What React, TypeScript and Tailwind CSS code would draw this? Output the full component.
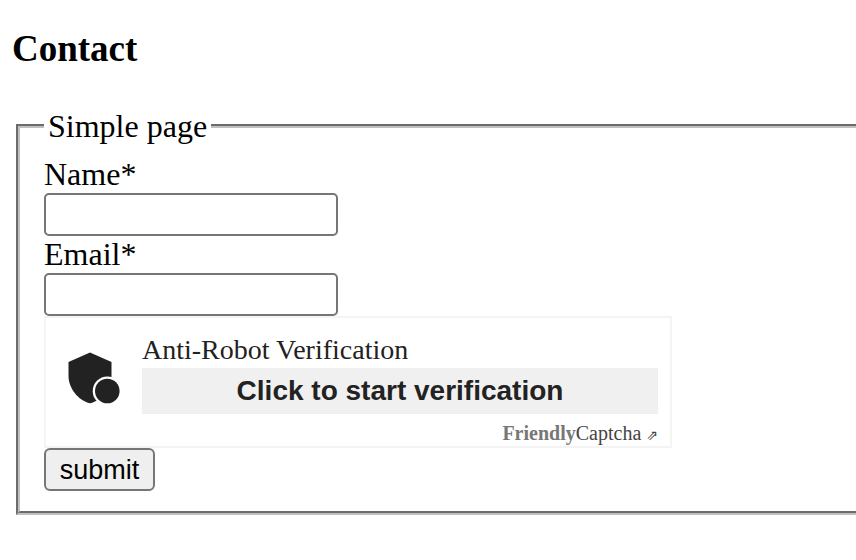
import type { InputHTMLAttributes } from 'react';

type FieldProps = InputHTMLAttributes<HTMLInputElement> & { id: string; label: string };

function Field({ id, label, ...rest }: FieldProps) {
  return (
    <div className="flex flex-col items-start">
      <label htmlFor={id} className="text-[32px] leading-[37px]">
        {label}
      </label>
      <input
        id={id}
        name={id}
        className="h-[43px] w-[294px] max-w-full rounded-[5px] border-2 border-[#767676] bg-white px-1 font-['Liberation_Sans',Arial,sans-serif] text-[27px]"
        {...rest}
      />
    </div>
  );
}

function ShieldIcon() {
  return (
    <svg viewBox="0 0 52 52" className="size-[52px] shrink-0" fill="#222222" aria-hidden="true">
      <path d="M22 0.5 L43.5 10 V24 C43.5 36 34 48.500 22 51.300 C10 48.500 0.5 36 0.5 24 V10 Z" />
      <circle cx="39.300" cy="39" r="14.600" fill="#ffffff" />
      <circle cx="39.300" cy="39" r="12.300" />
    </svg>
  );
}

function Captcha() {
  return (
    <div className="flex w-[628px] max-w-full border-2 border-[#f4f4f4] bg-white pt-4 pr-3 pb-[2px] pl-[22px] text-[#222222]">
      <div className="mr-[22px] pt-[18px]">
        <ShieldIcon />
      </div>
      <div className="flex min-w-0 flex-1 flex-col">
        <span className="text-[28px] leading-8">Anti-Robot Verification</span>
        <button
          type="button"
          className="mt-[2px] h-[46px] bg-[#f0f0f0] font-['Liberation_Sans',Arial,sans-serif] text-[28px] leading-8 font-bold"
        >
          Click to start verification
        </button>
        <a href="#captcha" className="mt-2 flex items-baseline self-end text-[20px] leading-[22px] text-[#444444]">
          <b className="text-[#777777]">Friendly</b>
          <span>Captcha</span>
          <span className="ml-[5px] font-['DejaVu_Sans',sans-serif] text-[14px] leading-none">⇗</span>
        </a>
      </div>
    </div>
  );
}

export default function App() {
  return (
    <main className="min-h-screen bg-white pt-7 font-['Liberation_Serif','Times_New_Roman',serif] text-black">
      <h3 className="pl-3 text-[37px] leading-[42px] font-bold">Contact</h3>
      <form className="mt-[38px] ml-4" onSubmit={(event) => event.preventDefault()}>
        <fieldset className="border-4 border-r-0 border-[#c0c0c0] px-6 pt-3 pb-5 [border-style:groove]">
          <legend className="px-1 text-[32px] leading-9">Simple page</legend>
          <Field id="name" label="Name*" type="text" required />
          <Field id="email" label="Email*" type="email" required />
          <Captcha />
          <button
            type="submit"
            className="block h-[43px] w-[111px] rounded-[6px] border-2 border-[#767676] bg-[#efefef] font-['Liberation_Sans',Arial,sans-serif] text-[27px] leading-8"
          >
            submit
          </button>
        </fieldset>
      </form>
    </main>
  );
}
